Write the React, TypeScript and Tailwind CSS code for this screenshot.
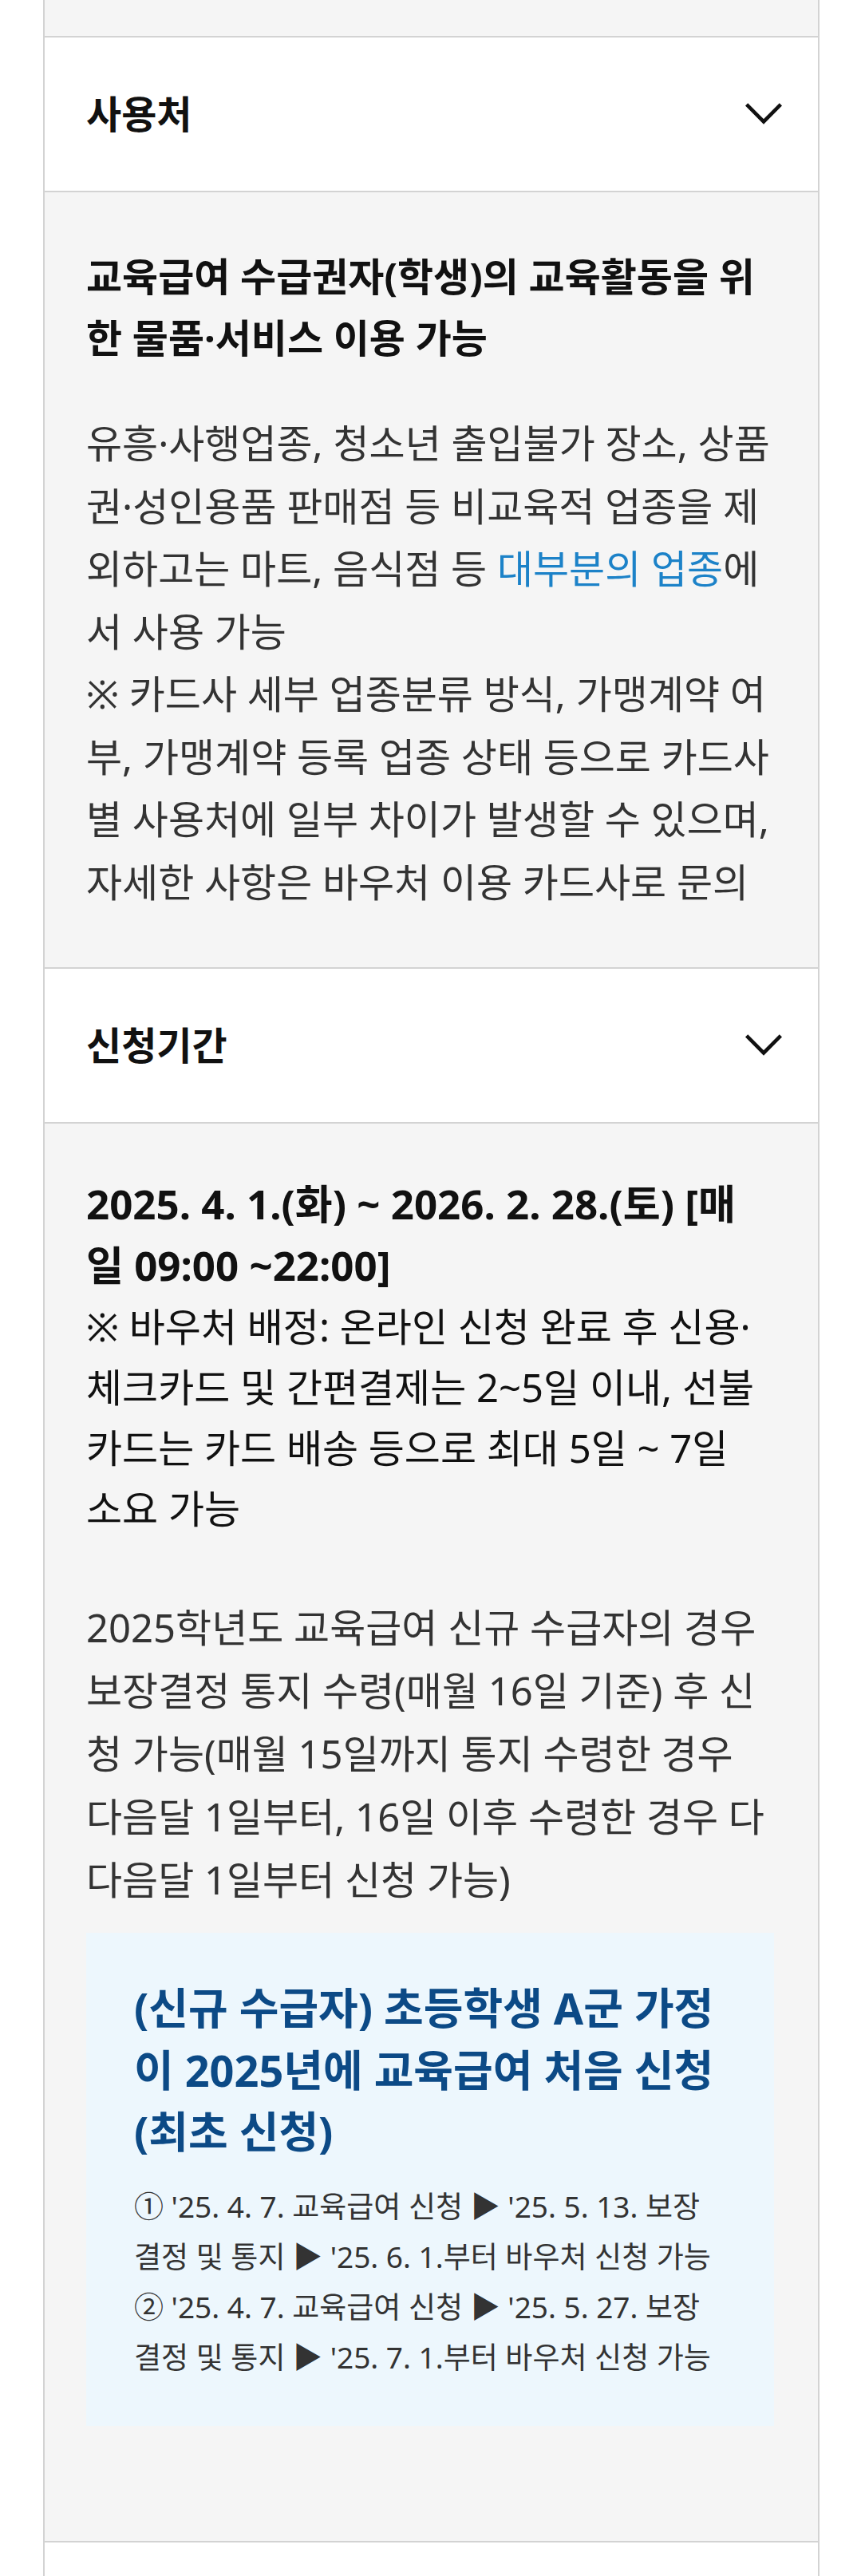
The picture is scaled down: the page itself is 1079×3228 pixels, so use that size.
import React from "react";

const Chevron = () => (
  <svg width="46" height="28" viewBox="0 0 46 28" fill="none" aria-hidden="true">
    <polyline
      points="1.6,1.8 23,23.4 44.4,1.8"
      stroke="#111111"
      strokeWidth="4.6"
      strokeLinecap="butt"
      strokeLinejoin="miter"
    />
  </svg>
);

function AccordionHeader({ title }: { title: string }) {
  return (
    <button
      type="button"
      className="flex h-[192px] w-full items-center justify-between bg-white pl-[52px] pr-[45px] text-left"
    >
      <span className="text-[48px] font-semibold leading-none text-[#111111]">{title}</span>
      <Chevron />
    </button>
  );
}

function Lines({ lines }: { lines: React.ReactNode[] }) {
  return (
    <>
      {lines.map((line, i) => (
        <React.Fragment key={i}>
          {line}
          {i < lines.length - 1 && <br />}
        </React.Fragment>
      ))}
    </>
  );
}

const usageTitle = ["교육급여 수급권자(학생)의 교육활동을 위", "한 물품·서비스 이용 가능"];

const usageBody: React.ReactNode[] = [
  "유흥·사행업종, 청소년 출입불가 장소, 상품",
  "권·성인용품 판매점 등 비교육적 업종을 제",
  <>
    외하고는 마트, 음식점 등 <a className="text-[#1c82c8]">대부분의 업종</a>에
  </>,
  "서 사용 가능",
  "※ 카드사 세부 업종분류 방식, 가맹계약 여",
  "부, 가맹계약 등록 업종 상태 등으로 카드사",
  "별 사용처에 일부 차이가 발생할 수 있으며,",
  "자세한 사항은 바우처 이용 카드사로 문의",
];

const periodBold = ["2025. 4. 1.(화) ~ 2026. 2. 28.(토) [매", "일 09:00 ~22:00]"];

const periodNote = [
  "※ 바우처 배정: 온라인 신청 완료 후 신용·",
  "체크카드 및 간편결제는 2~5일 이내, 선불",
  "카드는 카드 배송 등으로 최대 5일 ~ 7일",
  "소요 가능",
];

const newRecipient = [
  "2025학년도 교육급여 신규 수급자의 경우",
  "보장결정 통지 수령(매월 16일 기준) 후 신",
  "청 가능(매월 15일까지 통지 수령한 경우",
  "다음달 1일부터, 16일 이후 수령한 경우 다",
  "다음달 1일부터 신청 가능)",
];

const exampleTitle = ["(신규 수급자) 초등학생 A군 가정", "이 2025년에 교육급여 처음 신청", "(최초 신청)"];

const exampleSteps = [
  "① '25. 4. 7. 교육급여 신청 ▶ '25. 5. 13. 보장",
  "결정 및 통지 ▶ '25. 6. 1.부터 바우처 신청 가능",
  "② '25. 4. 7. 교육급여 신청 ▶ '25. 5. 27. 보장",
  "결정 및 통지 ▶ '25. 7. 1.부터 바우처 신청 가능",
];

export default function App() {
  return (
    <div className="min-h-[3228px] w-[1079px] bg-white font-['Noto_Sans','Noto_Sans_CJK_KR',sans-serif]">
      <div className="ml-[54px] w-[973px] border-x-2 border-[#d3d3d3]">
        {/* tail of the previous panel */}
        <div className="h-[45px] bg-[#f5f5f5]" />

        {/* 사용처 */}
        <div className="border-y-2 border-[#d3d3d3]">
          <AccordionHeader title="사용처" />
        </div>
        <div className="bg-[#f5f5f5] pb-[68px] pl-[52px] pr-[55px] pt-[67px]">
          <p className="whitespace-nowrap text-[49px] font-bold leading-[77px] text-[#111111]">
            <Lines lines={usageTitle} />
          </p>
          <p className="mt-[54px] whitespace-nowrap text-[49px] leading-[78.5px] text-[#333333]">
            <Lines lines={usageBody} />
          </p>
        </div>

        {/* 신청기간 */}
        <div className="border-y-2 border-[#d3d3d3]">
          <AccordionHeader title="신청기간" />
        </div>
        <div className="bg-[#f5f5f5] pb-[144px] pl-[52px] pr-[55px] pt-[62px]">
          <p className="whitespace-nowrap text-[49px] leading-[76px] text-[#111111]">
            <strong className="text-[51px] font-bold">
              <Lines lines={periodBold} />
            </strong>
            <br />
            <Lines lines={periodNote} />
          </p>
          <p className="mt-[72px] whitespace-nowrap text-[49px] leading-[79px] text-[#333333]">
            <Lines lines={newRecipient} />
          </p>

          <div className="mt-[27px] bg-[#edf7fd] pb-[55px] pl-[60px] pr-[30px] pt-[56px]">
            <p className="whitespace-nowrap text-[54px] font-bold leading-[77.5px] text-[#0c4a86]">
              <Lines lines={exampleTitle} />
            </p>
            <p className="mt-[22px] whitespace-nowrap text-[37px] leading-[63px] text-[#333333]">
              <Lines lines={exampleSteps} />
            </p>
          </div>
        </div>

        {/* next panel header, cut off at the bottom */}
        <div className="h-[44px] border-t-2 border-[#d3d3d3] bg-white" />
      </div>
    </div>
  );
}
